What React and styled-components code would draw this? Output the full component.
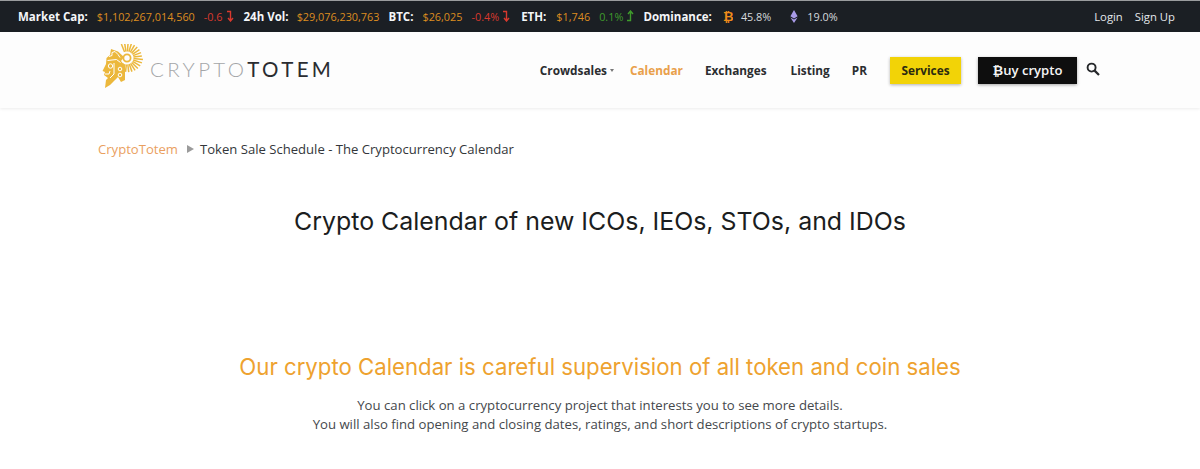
import React from 'react';
import styled, { createGlobalStyle } from 'styled-components';

const Global = createGlobalStyle`
  html, body { margin: 0; padding: 0; background: #fff; font-family: "Open Sans", sans-serif; }
  * { box-sizing: border-box; }
`;

const Ticker = styled.div`
  height: 32px;
  background: #1b1f24;
  border-top: 1px solid #9a9c9e;
  display: flex;
  align-items: center;
  justify-content: space-between;
  padding: 0 25px 1px 18px;
  font-size: 10.85px;
  white-space: nowrap;
`;
const Stats = styled.div`display: flex; align-items: center;`;
const Label = styled.b`
  color: #f4f6f8;
  font-weight: 700;
  font-size: 11.5px;
  margin-left: ${p => p.$ml || 0}px;
  margin-right: ${p => p.$mr || 9}px;
`;
const Value = styled.span`
  color: ${p => p.$c || '#dd8d20'};
  margin-right: ${p => p.$mr || 0}px;
`;
const Arrow = styled.svg`
  width: 8px; height: 12px; margin-left: 3px; flex: none;
`;
const CoinIcon = styled.svg`
  margin-right: ${p => p.$mr}px;
  flex: none;
`;
const CoinGlyph = styled.text`
  font-family: "DejaVu Sans", sans-serif;
  font-size: 13px;
  font-weight: 700;
  fill: #f08c1a;
`;
const Auth = styled.div`display: flex; gap: 12px;`;
const AuthLink = styled.a`color: #e4e8ec; font-size: 11.3px;`;

const Header = styled.header`
  height: 76px;
  background: #fdfdfd;
  box-shadow: 0 1px 3px rgba(0,0,0,.08);
  display: flex;
  align-items: center;
  justify-content: space-between;
  padding: 0 100px 0 101px;
`;
const Logo = styled.div`display: flex; align-items: center; gap: 5px; margin-top: -6px;`;
const LogoText = styled.div`
  font-family: Lato, sans-serif;
  font-weight: 300;
  font-size: 20.5px;
  letter-spacing: 3.35px;
  color: #a4a6a8;
  padding-top: 3px;
  span { color: #2a2c30; font-weight: 400; }
`;
const Nav = styled.nav`display: flex; align-items: center;`;
const NavItem = styled.a`
  font-size: 11.8px;
  font-weight: 700;
  color: ${p => p.$active ? '#e9a04a' : '#2b2d30'};
  margin-right: ${p => p.$mr}px;
  display: flex;
  align-items: center;
`;
const Caret = styled.i`
  width: 0; height: 0;
  margin-left: 3px;
  border-left: 2.5px solid transparent;
  border-right: 2.5px solid transparent;
  border-top: 3px solid #777;
`;
const Services = styled.a`
  width: 71px; height: 27px;
  background: #f2d307;
  color: #2b2a10;
  font-size: 11.8px;
  font-weight: 700;
  display: flex; align-items: center; justify-content: center;
  box-shadow: 0 1px 3px rgba(0,0,0,.3);
  margin-right: 17px;
`;
const Buy = styled.a`
  width: 99px; height: 27px;
  background: #0e0e0e;
  color: #f5f5f5;
  font-size: 13.1px;
  font-weight: 600;
  display: flex; align-items: center; justify-content: center;
  box-shadow: 0 1px 3px rgba(0,0,0,.35);
  margin-right: 9px;
`;
const Search = styled.svg`width: 14px; height: 14px; margin-top: -3px;`;

const Main = styled.main`
  padding: 0 98px;
`;
const Crumbs = styled.div`
  display: flex;
  align-items: center;
  padding-top: 32px;
  height: 50px;
  font-size: 13.1px;
  color: #33363a;
`;
const CrumbLink = styled.a`color: #ea9f5f;`;
const CrumbSep = styled.i`
  width: 0; height: 0;
  margin: 0 6px 0 9px;
  border-top: 4px solid transparent;
  border-bottom: 4px solid transparent;
  border-left: 7px solid #9b9b9b;
`;
const Title = styled.h1`
  margin: 45px 0 0;
  text-align: center;
  font-family: Inter, sans-serif;
  font-weight: 400;
  font-size: 24.9px;
  line-height: 36px;
  color: #1b1d20;
`;
const Sub = styled.h2`
  margin: 112px 0 0;
  text-align: center;
  font-family: Inter, sans-serif;
  font-weight: 400;
  font-size: 22.2px;
  line-height: 32px;
  color: #eea22f;
`;
const Para = styled.p`
  margin: 13px 0 0;
  text-align: center;
  font-size: 13.16px;
  line-height: 19px;
  color: #45484c;
`;

const Down = ({ c = '#d9392e' }) => (
  <Arrow viewBox="0 0 8 12"><path d="M1 1.5H4.5V10.5M2 8l2.5 3L7 8" fill="none" stroke={c} strokeWidth="1.4" /></Arrow>
);
const Up = ({ c = '#3f9b2c' }) => (
  <Arrow viewBox="0 0 8 12"><path d="M1 10.5H4.5V1.5M2 4l2.5-3L7 4" fill="none" stroke={c} strokeWidth="1.4" /></Arrow>
);

const LogoMark = () => (
  <svg width="44" height="46" viewBox="0 0 44 46">
    <g stroke="#ecb83c" strokeWidth="1.5">
      {Array.from({ length: 19 }).map((_, i) => {
        const a = (-112 + i * 13) * Math.PI / 180;
        const cx = 26, cy = 14;
        const r = i < 9 ? 15 : 16 - (i - 9) * 0.3;
        return <line key={i} x1={cx + 6.5 * Math.cos(a)} y1={cy + 6.5 * Math.sin(a)} x2={cx + r * Math.cos(a)} y2={cy + r * Math.sin(a)} />;
      })}
    </g>
    <path fill="#ecb83c" d="M10 5L17 7.5 23 13 20 17 24 22 24 36 20 38 17 33 14 36 9 41 4 44 5 36 7 34 3 31 4 28 1.5 27 5 20 5.5 14 9 11Z" />
    <g fill="none" stroke="#fff" strokeWidth="1">
      <path d="M8 12.5l3-1v-3l3-1 3 3 2 3M6.5 16.5l9-1 4 3" />
      <circle cx="9.5" cy="22" r="2.2" />
      <path d="M4 30h4l1-3M13 19v11l-4 4" />
      <circle cx="19" cy="25" r="1.8" />
      <circle cx="19" cy="31" r="1.8" />
    </g>
    <circle cx="26" cy="14" r="3.6" fill="none" stroke="#ecb83c" strokeWidth="1.8" />
  </svg>
);

export default function App() {
  return (
    <>
      <Global />
      <Ticker>
        <Stats>
          <Label>Market Cap:</Label>
          <Value $mr={9}>$1,102,267,014,560</Value>
          <Value $c="#d9392e">-0.6</Value><Down />
          <Label $ml={10} $mr={8}>24h Vol:</Label>
          <Value $mr={9}>$29,076,230,763</Value>
          <Label>BTC:</Label>
          <Value $mr={9}>$26,025</Value>
          <Value $c="#d9392e">-0.4%</Value><Down />
          <Label $ml={11} $mr={10}>ETH:</Label>
          <Value $mr={9}>$1,746</Value>
          <Value $c="#3f9b2c">0.1%</Value><Up />
          <Label $ml={9} $mr={11}>Dominance:</Label>
          <CoinIcon $mr={8} width="10" height="13" viewBox="0 0 10 13"><CoinGlyph x="0" y="11">₿</CoinGlyph></CoinIcon>
          <Value $c="#d6dade" $mr={19}>45.8%</Value>
          <CoinIcon $mr={9} width="8" height="13" viewBox="0 0 8 13"><path fill="#a99be8" d="M4 0l3.6 6.3L4 8.5.4 6.3zM4 9.6l3.6-2.2L4 13 .4 7.4z" /></CoinIcon>
          <Value $c="#d6dade">19.0%</Value>
        </Stats>
        <Auth>
          <AuthLink>Login</AuthLink>
          <AuthLink>Sign Up</AuthLink>
        </Auth>
      </Ticker>
      <Header>
        <Logo>
          <LogoMark />
          <LogoText>CRYPTO<span>TOTEM</span></LogoText>
        </Logo>
        <Nav>
          <NavItem $mr={16}>Crowdsales<Caret /></NavItem>
          <NavItem $active $mr={22}>Calendar</NavItem>
          <NavItem $mr={24}>Exchanges</NavItem>
          <NavItem $mr={22}>Listing</NavItem>
          <NavItem $mr={23}>PR</NavItem>
          <Services>Services</Services>
          <Buy>₿uy crypto</Buy>
          <Search viewBox="0 0 14 14"><circle cx="5.6" cy="5.6" r="4" fill="none" stroke="#26282b" strokeWidth="1.9" /><path d="M8.6 8.6L13 13" stroke="#26282b" strokeWidth="2.2" /></Search>
        </Nav>
      </Header>
      <Main>
        <Crumbs>
          <CrumbLink>CryptoTotem</CrumbLink>
          <CrumbSep />
          Token Sale Schedule - The Cryptocurrency Calendar
        </Crumbs>
        <Title>Crypto Calendar of new ICOs, IEOs, STOs, and IDOs</Title>
        <Sub>Our crypto Calendar is careful supervision of all token and coin sales</Sub>
        <Para>You can click on a cryptocurrency project that interests you to see more details.<br />You will also find opening and closing dates, ratings, and short descriptions of crypto startups.</Para>
      </Main>
    </>
  );
}
